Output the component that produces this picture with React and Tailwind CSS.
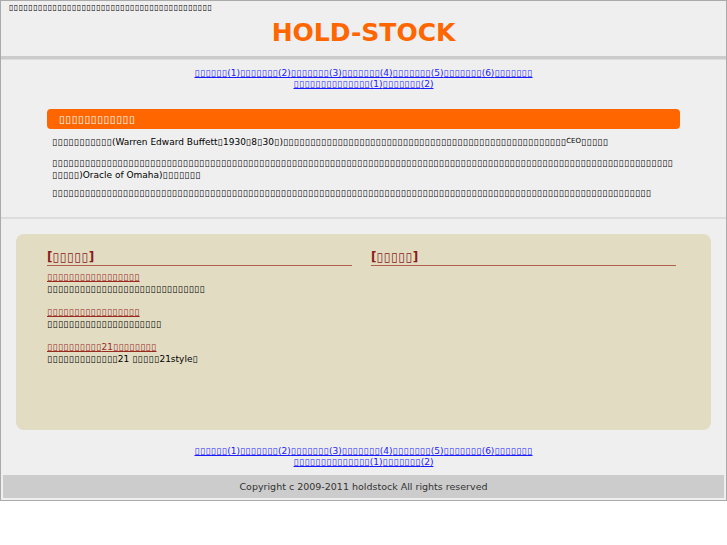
import React from "react";

const B = (n) => (
  <span className="tracking-[0.055em]">{"\u25AF".repeat(n)}</span>
);

const font = { fontFamily: '"DejaVu Sans", sans-serif' };

function NavLinks() {
  const items1 = [
    [6, "(1)"],
    [7, "(2)"],
    [7, "(3)"],
    [7, "(4)"],
    [7, "(5)"],
    [7, "(6)"],
    [7, ""],
  ];
  const items2 = [
    [14, "(1)"],
    [7, "(2)"],
  ];
  return (
    <div className="text-center text-[9px] leading-[11px]">
      <div>
        {items1.map(([n, t], i) => (
          <a key={i} href="#" className="text-[#1a1aff] underline">
            {B(n)}
            {t}
          </a>
        ))}
      </div>
      <div>
        {items2.map(([n, t], i) => (
          <a key={i} href="#" className="text-[#1a1aff] underline">
            {B(n)}
            {t}
          </a>
        ))}
      </div>
    </div>
  );
}

function Item({ link, desc }) {
  return (
    <div className="text-[9px] leading-[12px]">
      <a href="#" className="text-[#9a2a1e] underline">
        {link}
      </a>
      <div className="text-black">{desc}</div>
    </div>
  );
}

export default function App() {
  return (
    <div style={font} className="bg-white w-[727px] h-[545px]">
      <div className="w-[727px] border border-[#aaaaaa] bg-[#efefef]">
        {/* header */}
        <div className="h-[55px]">
          <p className="pl-[8px] pt-[2px] text-[8px] leading-[10px] text-black break-all">
            {B(42)}
          </p>
          <h1 className="mt-[5px] text-center text-[25px] leading-[30px] font-bold text-[#ff6600]">
            HOLD-STOCK
          </h1>
        </div>
        <div className="h-[3px] bg-[#cccccc]" />
        <div className="h-[1px] bg-[#dddddd]" />

        <div className="pt-[8px]">
          <NavLinks />
        </div>

        {/* main */}
        <div className="ml-[46px] w-[633px] mt-[19px]">
          <div className="h-[20px] rounded-[4px] bg-[#ff6600] pl-[12px] text-[10.5px] leading-[20px] text-white">
            {B(12)}
          </div>
          <div className="px-[5px] text-[9px] leading-[12px] text-black break-all">
            <p className="mt-[7px]">
              {B(11)}(Warren Edward Buffett{B(1)}1930{B(1)}8{B(1)}30{B(1)}){B(52)}
              <span className="relative top-[-2px] text-[7px]">CEO</span>
              {B(5)}
            </p>
            <p className="mt-[8px]">
              {B(119)})Oracle of Omaha){B(7)}
            </p>
            <p className="mt-[6px]">{B(110)}</p>
          </div>
        </div>

        <div className="mt-[18px] h-[2px] bg-[#dddddd]" />

        {/* beige box */}
        <div className="ml-[15px] mt-[15px] w-[695px] h-[196px] rounded-[8px] bg-[#e1dcc2] pl-[31px] pr-[35px] pt-[16px]">
          <div className="flex gap-[19px]">
            {[0, 1].map((c) => (
              <div key={c} className="w-[305px]">
                <div className="border-b border-[#b0604a] pb-[1px] text-[12px] leading-[14px] font-bold text-[#8b1a1a]">
                  [{B(5)}]
                </div>
                {c === 0 && (
                  <div className="mt-[5px] flex flex-col gap-[11px]">
                    <Item link={<>{B(17)} </>} desc={B(29)} />
                    <Item link={<>{B(17)} </>} desc={B(21)} />
                    <Item
                      link={
                        <>
                          {B(10)}21{B(8)}{" "}
                        </>
                      }
                      desc={
                        <>
                          {B(13)}21 {B(5)}21style{B(1)}
                        </>
                      }
                    />
                  </div>
                )}
              </div>
            ))}
          </div>
        </div>

        <div className="mt-[16px]">
          <NavLinks />
        </div>

        <div className="mx-[2px] mt-[7px] mb-[2px] h-[23px] bg-[#cccccc] text-center text-[9.5px] leading-[23px] text-[#333333]">
          Copyright c 2009-2011 holdstock All rights reserved
        </div>
      </div>
    </div>
  );
}
